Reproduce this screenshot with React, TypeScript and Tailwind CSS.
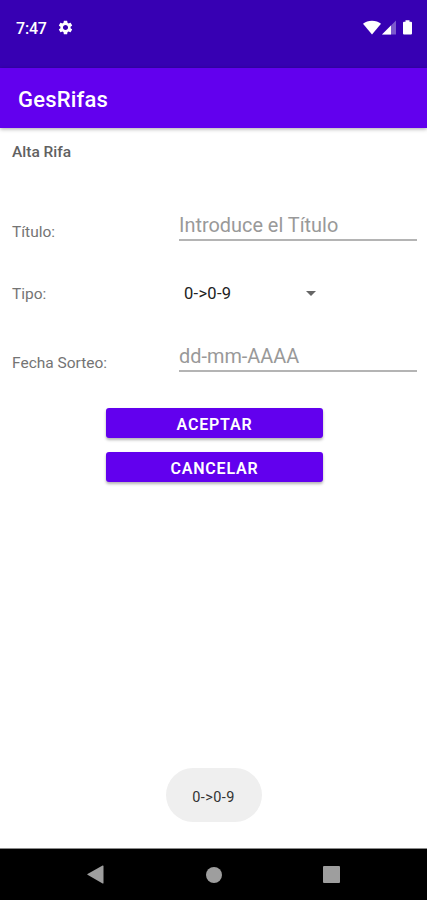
import React from 'react';

const StatusBar = () => (
  <header className="flex h-[68px] justify-between bg-[#3700b3] pt-[18px] pr-[15px] pl-4 text-white">
    <div className="flex h-5 items-center gap-[10px]">
      <span className="pt-px text-[16px] leading-5 font-medium tracking-[-0.2px]">7:47</span>
      <svg className="mb-[2px] size-[17px]" viewBox="0 0 24 24" fill="currentColor">
        <path d="M19.14 12.94c.04-.3.06-.61.06-.94 0-.32-.02-.64-.07-.94l2.03-1.58c.18-.14.23-.41.12-.61l-1.92-3.32c-.12-.22-.37-.29-.59-.22l-2.39.96c-.5-.38-1.03-.7-1.62-.94l-.36-2.54c-.04-.24-.24-.41-.48-.41h-3.84c-.24 0-.43.17-.47.41l-.36 2.54c-.59.24-1.13.57-1.62.94l-2.39-.96c-.22-.08-.47 0-.59.22L2.74 8.87c-.12.21-.08.47.12.61l2.03 1.58c-.05.3-.09.63-.09.94s.02.64.07.94l-2.03 1.58c-.18.14-.23.41-.12.61l1.92 3.32c.12.22.37.29.59.22l2.39-.96c.5.38 1.03.7 1.62.94l.36 2.54c.05.24.24.41.48.41h3.84c.24 0 .44-.17.47-.41l.36-2.54c.59-.24 1.13-.56 1.62-.94l2.39.96c.22.08.47 0 .59-.22l1.92-3.32c.12-.22.07-.47-.12-.61l-2.01-1.58zM12 15.6c-1.98 0-3.6-1.62-3.6-3.6s1.62-3.6 3.6-3.6 3.6 1.62 3.6 3.6-1.62 3.6-3.6 3.6z" />
      </svg>
    </div>
    {/* Wifi, signal, battery */}
    <div className="flex h-[18px] items-center">
      <svg className="h-[15px] w-[18px]" viewBox="0 0 18 15" fill="currentColor">
        <path d="M0 3.7C2.4 1.8 5.4.7 9 .7s6.6 1.1 9 3L9 14.5z" />
      </svg>
      <svg className="ml-px h-[15px] w-[14px]" viewBox="0 0 14 15" fill="currentColor">
        <path d="M14 .5V14.5H0z" opacity=".35" />
        <path d="M9 5.5V14.5H0z" />
      </svg>
      <svg className="ml-[7px] h-[15px] w-[9px]" viewBox="0 0 9 15" fill="currentColor">
        <path d="M2.5 0.3h4v1.4H8q1 0 1 1V13.5q0 1-1 1H1q-1 0-1-1V2.7q0-1 1-1h1.5z" />
      </svg>
    </div>
  </header>
);

const Field = ({ label, placeholder }: { label: string; placeholder: string }) => (
  <label className="flex h-[35px] items-end">
    <span className="-mb-px w-[167px] text-[15.5px] leading-5 text-[#747474]">{label}</span>
    <input
      type="text"
      placeholder={placeholder}
      className="h-[35px] w-[238px] border-b-2 border-[#b4b4b4] pt-[5px] text-[19.9px] leading-6 outline-none placeholder:text-[#999999]"
    />
  </label>
);

const ActionButton = ({ children }: { children: React.ReactNode }) => (
  <button className="h-[30px] w-[217px] rounded-[3px] bg-[#6200ee] pt-[3px] text-[16px] leading-5 font-semibold tracking-[0.8px] text-white shadow-[0_2px_3px_rgba(0,0,0,0.3)]">
    {children}
  </button>
);

const App = () => {
  return (
    <div className="flex h-[900px] w-[427px] flex-col overflow-hidden bg-white font-['Roboto',sans-serif]">
      <StatusBar />
      <div className="flex h-[60px] items-center bg-[#6200ee] pt-1 pl-[18px] shadow-[0_1px_4px_rgba(0,0,0,0.35)]">
        <h1 className="text-[22px] leading-7 font-medium tracking-[0.2px] text-white">GesRifas</h1>
      </div>

      <main className="flex flex-1 flex-col pt-[14px] pl-3">
        <h2 className="text-[15.5px] leading-5 font-medium text-[#616161]">Alta Rifa</h2>

        <div className="mt-[44px]">
          <Field label="Título:" placeholder="Introduce el Título" />
        </div>
        <div className="mt-[43px] flex h-5 items-center">
          <span className="w-[172px] text-[15.5px] leading-5 text-[#747474]">Tipo:</span>
          <span className="w-[122px] text-[16.5px] leading-5 tracking-[0.3px] text-[#222222]">0-&gt;0-9</span>
          <svg className="mb-px h-[5px] w-[10px]" viewBox="0 0 10 5" fill="#666666">
            <path d="M0 0h10L5 5z" />
          </svg>
        </div>
        <div className="mt-[33px]">
          <Field label="Fecha Sorteo:" placeholder="dd-mm-AAAA" />
        </div>

        <div className="mt-[36px] flex flex-col items-center gap-[14px] pr-[10px]">
          <ActionButton>ACEPTAR</ActionButton>
          <ActionButton>CANCELAR</ActionButton>
        </div>

        {/* Toast */}
        <div className="mt-auto mr-[12px] mb-[26px] flex h-[54px] w-[96px] items-center justify-center self-center rounded-[27px] bg-[#efefef] pt-[5px] text-[14.5px] tracking-[0.4px] text-[#333333]">
          0-&gt;0-9
        </div>
      </main>

      <nav className="flex h-[52px] items-center justify-between border-t border-[#8a8a8a] bg-black px-[87px] text-[#9e9e9e]">
        <svg className="h-[19px] w-[17px]" viewBox="0 0 17 19" fill="currentColor">
          <path d="M16.5 1v17a.6.6 0 0 1-.9.4L.5 9.8a.4.4 0 0 1 0-.7L15.6.6a.6.6 0 0 1 .9.4z" />
        </svg>
        <div className="size-4 rounded-full bg-[#9e9e9e]" />
        <div className="size-[17px] rounded-[1px] bg-[#9e9e9e]" />
      </nav>
    </div>
  );
};

export default App;
